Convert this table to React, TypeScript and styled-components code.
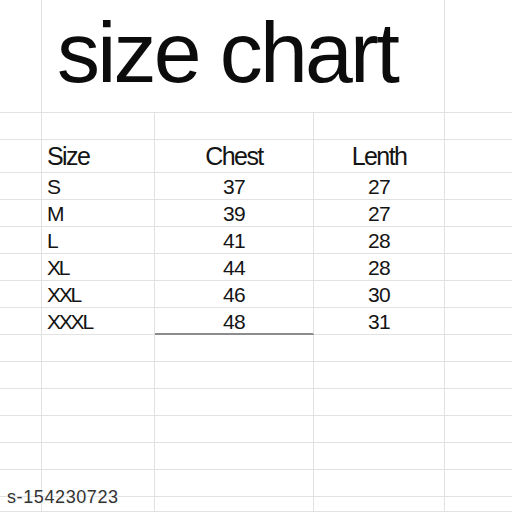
import React from "react";
import styled, { createGlobalStyle } from "styled-components";

const Global = createGlobalStyle`
  html, body { margin: 0; padding: 0; background: #fff; }
  body { width: 512px; height: 512px; overflow: hidden; font-family: "Liberation Sans", Arial, sans-serif; }
`;

const Page = styled.div`
  position: relative;
  width: 512px;
  height: 512px;
  background: #fff;
  overflow: hidden;
`;

const Sheet = styled.div`
  display: grid;
  grid-template-columns: 42px 113px 159px 131px 1fr;
  grid-template-rows: 113px 27px 33px repeat(12, 27px) 1fr;
  width: 512px;
  height: 512px;
`;

const Cell = styled.div<{ $align?: "left" | "center"; $underline?: boolean; $noRight?: boolean }>`
  box-sizing: border-box;
  border-right: ${(p) => (p.$noRight ? "none" : "1px solid #e2e2e2")};
  border-bottom: ${(p) => (p.$underline ? "2px solid #8c8c8c" : "1px solid #e2e2e2")};
  display: flex;
  align-items: flex-start;
  justify-content: ${(p) => (p.$align === "center" ? "center" : "flex-start")};
  padding-left: ${(p) => (p.$align === "left" ? "5px" : "0")};
  font-size: 21px;
  line-height: 27px;
  color: #141414;
  white-space: nowrap;
`;

const SizeLabel = styled.span`
  letter-spacing: -2.2px;
`;

const Num = styled.span`
  letter-spacing: -0.8px;
`;

const TitleCell = styled(Cell)`
  grid-column: 2 / 5;
  padding: 4px 0 0 15px;
  font-size: 86px;
  line-height: 96px;
  letter-spacing: -2.8px;
  color: #0c0c0c;
`;

const HeaderCell = styled(Cell)`
  font-size: 25px;
  line-height: 32px;
  letter-spacing: -1.6px;
`;

const Watermark = styled.div`
  position: absolute;
  left: 7px;
  bottom: 6px;
  font-size: 18px;
  line-height: 18px;
  letter-spacing: 0.6px;
  color: #333;
  text-shadow: 0 0 2px #fff, 0 0 2px #fff, 1px 1px 0 #f0f0f0;
`;

const rows: [string, number, number][] = [
  ["S", 37, 27],
  ["M", 39, 27],
  ["L", 41, 28],
  ["XL", 44, 28],
  ["XXL", 46, 30],
  ["XXXL", 48, 31],
];

export default function App() {
  const blanks = Array.from({ length: 7 });
  return (
    <Page>
      <Global />
      <Sheet>
        <Cell />
        <TitleCell>size chart</TitleCell>
        <Cell $noRight />

        <Cell />
        <Cell />
        <Cell />
        <Cell />
        <Cell $noRight />

        <Cell />
        <HeaderCell $align="left">Size</HeaderCell>
        <HeaderCell $align="center">Chest</HeaderCell>
        <HeaderCell $align="center">Lenth</HeaderCell>
        <Cell $noRight />

        {rows.map(([s, c, l], i) => (
          <React.Fragment key={s}>
            <Cell />
            <Cell $align="left">
              <SizeLabel>{s}</SizeLabel>
            </Cell>
            <Cell $align="center" $underline={i === rows.length - 1}>
              <Num>{c}</Num>
            </Cell>
            <Cell $align="center">
              <Num>{l}</Num>
            </Cell>
            <Cell $noRight />
          </React.Fragment>
        ))}

        {blanks.map((_, i) => (
          <React.Fragment key={i}>
            <Cell />
            <Cell />
            <Cell />
            <Cell />
            <Cell $noRight />
          </React.Fragment>
        ))}
      </Sheet>
      <Watermark>s-154230723</Watermark>
    </Page>
  );
}
